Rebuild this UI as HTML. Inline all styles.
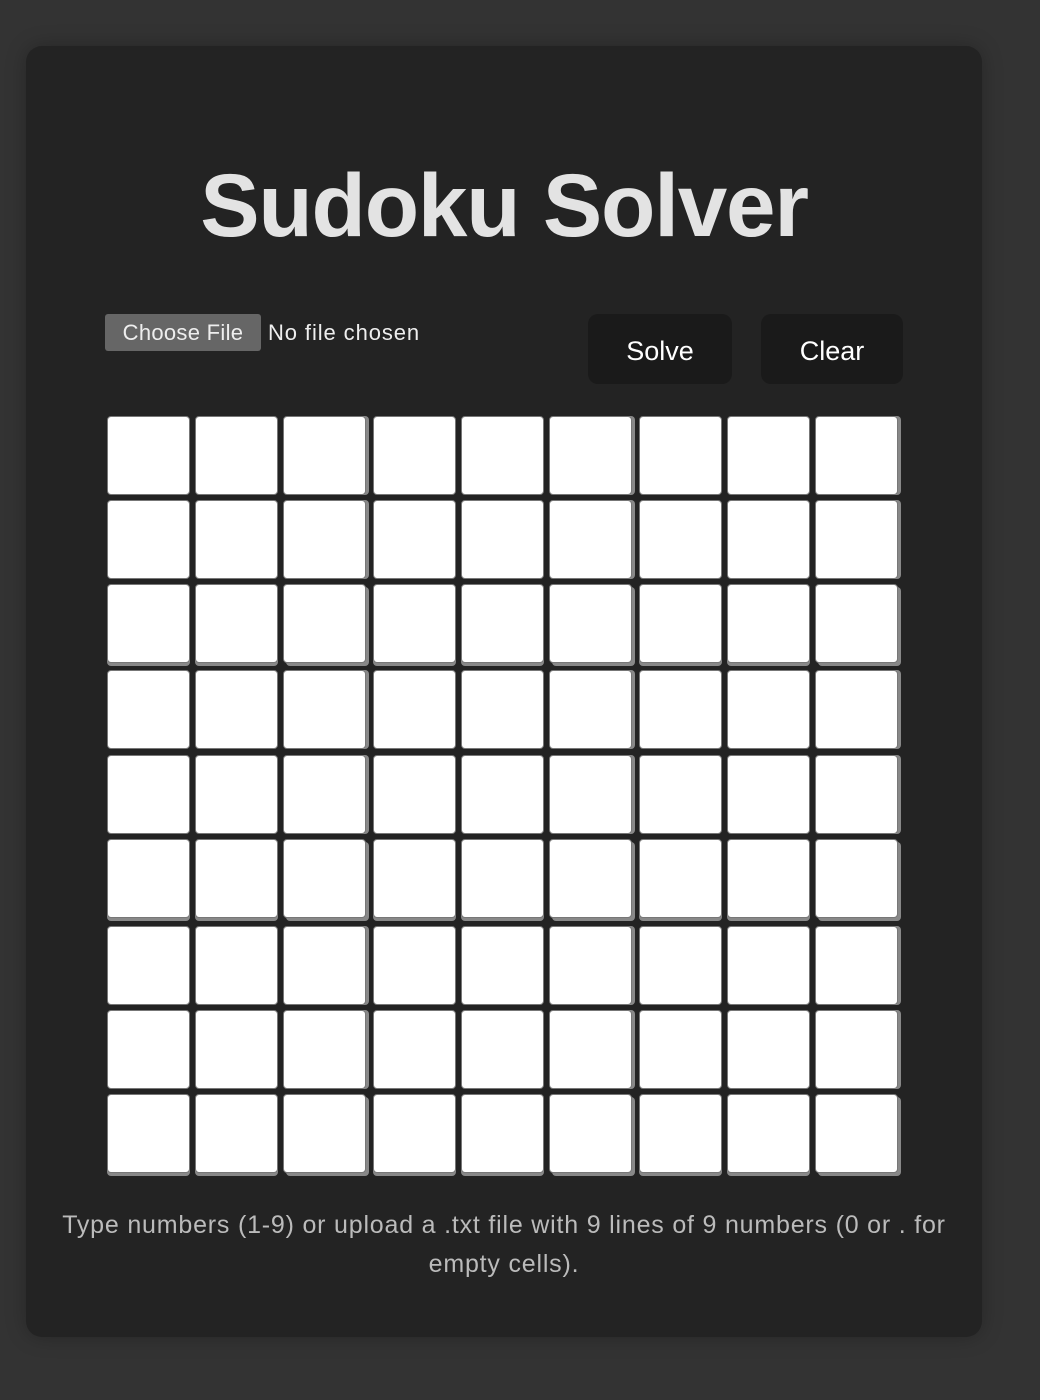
<!DOCTYPE html>
<html><head><style>
body{margin:0;width:1040px;height:1400px;background:#333;font-family:"Liberation Sans",sans-serif;position:relative;overflow:hidden}
.card{position:absolute;left:26px;top:46px;width:956px;height:1291px;background:#232323;border-radius:16px;box-shadow:0 0 20px rgba(0,0,0,.25)}
h1{position:absolute;left:0;width:1008px;margin:0;text-align:center;font-size:89px;line-height:90px;top:160px;color:#e3e3e3;font-weight:bold;letter-spacing:-1.2px}
.fb{position:absolute;left:105px;top:314px;width:156px;height:37px;background:#666;border-radius:3px;color:#eee;font-size:22px;line-height:37px;text-align:center;letter-spacing:0.3px}
.nf{position:absolute;left:268px;top:314px;line-height:37px;font-size:22px;color:#eee;letter-spacing:0.9px}
.btn{position:absolute;top:314px;height:70px;background:#1a1a1a;border-radius:10px;color:#fff;font-size:27px;line-height:74px;text-align:center}
.c{position:absolute;width:81px;height:77px;background:#fff;border:1px solid #777;border-radius:4px}
.r{box-shadow:3px 0 0 #888}.b{box-shadow:0 3px 0 #888}.rb{box-shadow:3px 3px 0 #888}
.ft{position:absolute;left:20px;width:968px;top:1206px;text-align:center;font-size:25px;line-height:39px;color:#bbb;letter-spacing:0.8px}
</style></head><body>
<div class="card"></div>
<h1>Sudoku Solver</h1>
<div class="fb">Choose File</div><div class="nf">No file chosen</div>
<div class="btn" style="left:588px;width:144px">Solve</div>
<div class="btn" style="left:761px;width:142px">Clear</div>
<div id="g"></div>
<div class="ft">Type numbers (1-9) or upload a .txt file with 9 lines of 9 numbers (0 or . for<br>empty cells).</div>
<script>
var xs=[107,195,283,373,461,549,639,727,815],ys=[416,500,584,670,755,839,926,1010,1094],h='';
for(var i=0;i<9;i++)for(var j=0;j<9;j++){var r=(j%3==2),b=(i%3==2);var cl=r&&b?'rb':r?'r':b?'b':'';h+='<div class="c '+cl+'" style="left:'+xs[j]+'px;top:'+ys[i]+'px"></div>';}
document.getElementById('g').innerHTML=h;
</script>
</body></html>
